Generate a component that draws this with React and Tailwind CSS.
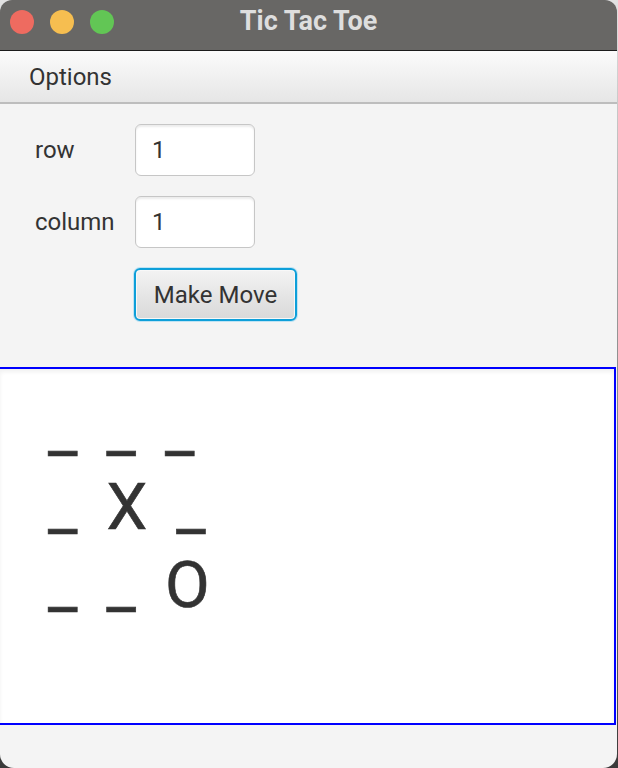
import React from 'react';

const rows = ['_ _ _', '_ X _', '_ _ O'];

const Field = ({ label }) => (
  <div className="flex items-center">
    <span className="w-[100px] text-[24px] text-[#333333]">{label}</span>
    <input
      readOnly
      defaultValue="1"
      className="w-[120px] h-[52px] rounded-[6px] border border-[#c6c6c6] bg-white pl-[16px] text-[24px] text-[#333333] outline-none shadow-[inset_0_2px_2px_rgba(0,0,0,0.08)]"
    />
  </div>
);

export default function App() {
  return (
    <div className="w-[618px] h-[768px] overflow-hidden bg-gradient-to-b from-[#e2e2e2] to-[#3a3a3a] font-['Roboto',sans-serif]">
      <div className="w-[617px] h-full flex flex-col overflow-hidden rounded-t-[12px] rounded-b-[14px] bg-[#f4f4f4]">
        {/* Title bar */}
        <div className="relative h-[51px] shrink-0 flex items-center justify-center bg-[#686765] border-b border-[#1c1c1c]">
          <div className="absolute left-[10px] top-[10px] flex gap-[16px]">
            <span className="w-[24px] h-[24px] rounded-full bg-[#ee6b60]" />
            <span className="w-[24px] h-[24px] rounded-full bg-[#f6be50]" />
            <span className="w-[24px] h-[24px] rounded-full bg-[#62c655]" />
          </div>
          <span className="text-[27px] font-bold text-[#dedede] -mt-[8px]">Tic Tac Toe</span>
        </div>

        {/* Menu bar */}
        <div className="h-[53px] shrink-0 flex items-center pl-[29px] bg-gradient-to-b from-[#fbfbfb] to-[#e6e6e6] border-b-2 border-[#bdbdbd]">
          <span className="text-[24px] text-[#333333]">Options</span>
        </div>

        {/* Form */}
        <div className="flex flex-col gap-[20px] pl-[35px] pt-[20px] pb-[46px]">
          <Field label="row" />
          <Field label="column" />
          <div className="pl-[99px]">
            <button className="w-[163px] h-[53px] rounded-[6px] border-2 border-[#0e9fd9] bg-gradient-to-b from-[#f3f3f3] to-[#d9d9d9] text-[24px] text-[#333333] shadow-[0_0_0_1px_#bfe3f3,inset_0_0_0_1px_#f8f8f8]">
              Make Move
            </button>
          </div>
        </div>

        {/* Board */}
        <div className="h-[358px] shrink-0 mr-[1px] border-y-2 border-r-2 border-[#0000ff] bg-white shadow-[inset_0_3px_4px_rgba(0,0,0,0.06)] pl-[48px] pt-[21px]">
          {rows.map((r) => (
            <div key={r} className="h-[78px] leading-[78px] text-[65px] text-[#333333] whitespace-pre [word-spacing:13px] [-webkit-text-stroke:0.6px_#333333]">
              {r}
            </div>
          ))}
        </div>

        <div className="flex-1" />
      </div>
    </div>
  );
}
